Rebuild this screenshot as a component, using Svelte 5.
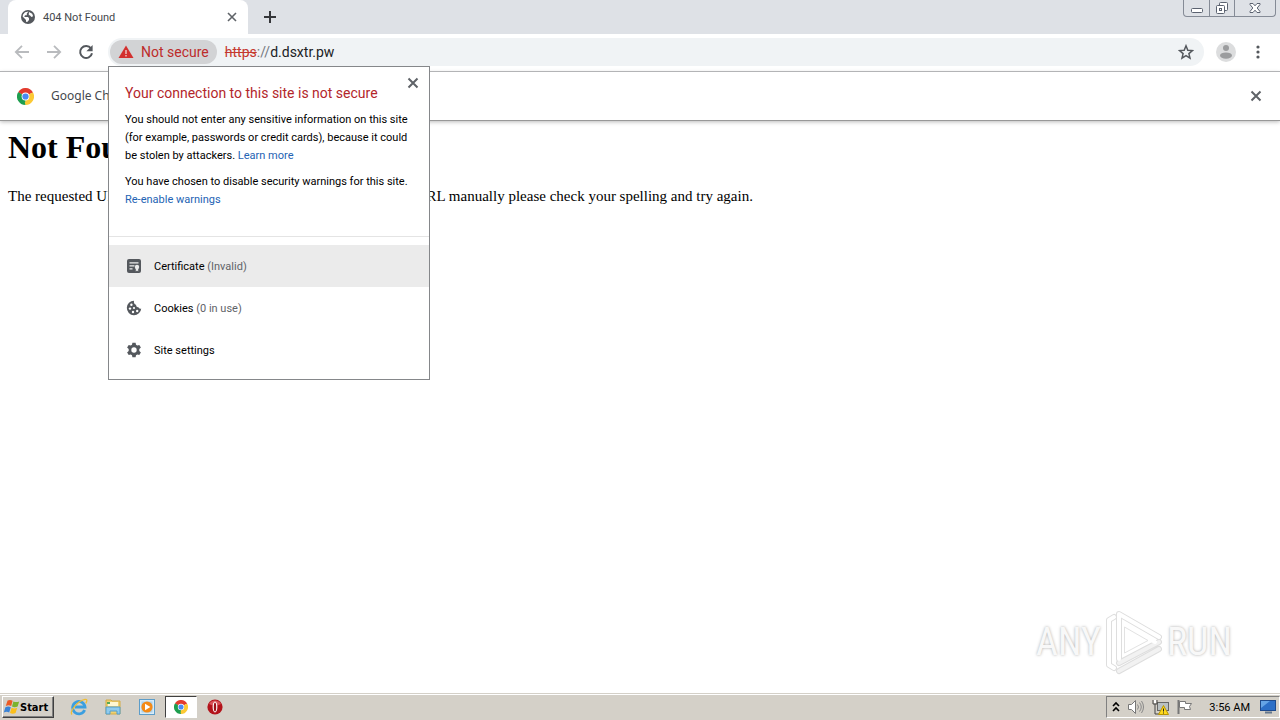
<script lang="ts">
	type RowIcon = 'certificate' | 'cookie' | 'settings';

	interface SiteRow {
		icon: RowIcon;
		label: string;
		detail?: string;
	}

	const rows: SiteRow[] = [
		{ icon: 'certificate', label: 'Certificate', detail: '(Invalid)' },
		{ icon: 'cookie', label: 'Cookies', detail: '(0 in use)' },
		{ icon: 'settings', label: 'Site settings' }
	];

	let active = $state<RowIcon>('certificate');
	let popupOpen = $state(true);
	let infobarOpen = $state(true);
</script>

{#snippet cross()}
	<svg width="12" height="12" viewBox="0 0 12 12">
		<path d="M1.5 1.5l9 9M10.5 1.5l-9 9" stroke="#5f6368" stroke-width="2" />
	</svg>
{/snippet}

{#snippet chrome(size: number)}
	<svg width={size} height={size} viewBox="0 0 48 48">
		<path d="M24 24L3.2 12A24 24 0 0 1 44.8 12z" fill="#e33b2e" />
		<path d="M24 24L44.8 12A24 24 0 0 1 24 48z" fill="#fcc934" />
		<path d="M24 24V48A24 24 0 0 1 3.2 12z" fill="#1e9e4f" />
		<path d="M24 13h20.8v-1H24z" fill="#e33b2e" />
		<path d="M14.5 29.5L3.2 12l7.6 4.4z" fill="#1e9e4f" />
		<path d="M33.5 29.5L24 48l-2-8z" fill="#fcc934" />
		<circle cx="24" cy="24" r="11" fill="#fff" />
		<circle cx="24" cy="24" r="8.8" fill="#4a8af4" />
	</svg>
{/snippet}

<div class="screen">
	<header class="tabstrip">
		<div class="tab">
			<svg width="16" height="16" viewBox="0 0 16 16">
				<circle cx="8" cy="8" r="7" fill="#54585d" />
				<path d="M8.5 2.5L6.8 4.6v1.6H5L4.3 8H8l1 1.3v1.6L7.2 13 6 12.8V11L2.6 7.6l.5-2L5 3.2z" fill="#fff" />
				<path d="M9 3l3.2 1.8.9 2.4-1.7.8-1.5-1.8H8.8V4.8z" fill="#fff" />
			</svg>
			<span class="tab-title">404 Not Found</span>
			<button class="plain" aria-label="Close tab">
				<svg width="10" height="10" viewBox="0 0 10 10">
					<path d="M1 1l8 8M9 1L1 9" stroke="#5f6368" stroke-width="1.6" />
				</svg>
			</button>
		</div>
		<button class="plain new-tab" aria-label="New tab">
			<svg width="12" height="12" viewBox="0 0 12 12">
				<path d="M6 0v12M0 6h12" stroke="#35363a" stroke-width="2" />
			</svg>
		</button>
		<div class="window-buttons">
			<button aria-label="Minimize">
				<svg width="12" height="16" viewBox="0 0 12 16">
					<rect x=".5" y="8.5" width="11" height="4" rx="1" fill="#fff" stroke="#5b6270" />
				</svg>
			</button>
			<button aria-label="Restore">
				<svg width="14" height="16" viewBox="0 0 14 16">
					<rect x="4.5" y="2.5" width="8" height="8" rx="1" fill="#fff" stroke="#5b6270" />
					<rect x="1.5" y="5.5" width="8" height="8" rx="1" fill="#fff" stroke="#5b6270" />
					<rect x="4.5" y="8.5" width="2" height="2" fill="#fff" stroke="#5b6270" />
				</svg>
			</button>
			<button class="wide" aria-label="Close">
				<svg width="12" height="16" viewBox="0 0 12 16">
					<path
						d="M1 3.5h3l2 2.3 2-2.3h3v1L8.2 8l2.8 3.5v1H8l-2-2.3-2 2.3H1v-1L3.8 8 1 4.5z"
						fill="#fff"
						stroke="#5b6270"
					/>
				</svg>
			</button>
		</div>
	</header>

	<nav class="toolbar">
		<button class="plain nav" aria-label="Back">
			<svg width="16" height="16" viewBox="0 0 16 16">
				<path d="M15 8H2M8 1.8L1.8 8 8 14.2" fill="none" stroke="#b9bbbe" stroke-width="1.8" />
			</svg>
		</button>
		<button class="plain nav" aria-label="Forward">
			<svg width="16" height="16" viewBox="0 0 16 16">
				<path d="M1 8h13M8 1.8L14.2 8 8 14.2" fill="none" stroke="#b9bbbe" stroke-width="1.8" />
			</svg>
		</button>
		<button class="plain nav" aria-label="Reload">
			<svg width="16" height="16" viewBox="0 0 16 16">
				<path d="M13 4.4A6 6 0 1 0 14 9.2" fill="none" stroke="#54585d" stroke-width="2" />
				<path d="M14.6 1v6.2H8.4z" fill="#54585d" />
			</svg>
		</button>
		<div class="omnibox">
			<button class="security-chip" onclick={() => (popupOpen = !popupOpen)}>
				<svg width="16" height="16" viewBox="0 0 16 16">
					<path d="M8 1.5L15.5 14H.5z" fill="#d3302f" />
					<path d="M8 6v4M8 11v1.6" stroke="#f0c9c8" stroke-width="1.4" />
				</svg>
				Not secure
			</button>
			<span class="url"><s>https</s><i>://</i>d.dsxtr.pw</span>
			<button class="plain" aria-label="Bookmark this page">
				<svg width="16" height="16" viewBox="0 0 16 16">
					<path
						d="M8 1.8l1.8 4.4 4.7.4-3.6 3 1.1 4.6L8 11.7l-4 2.5 1.1-4.6-3.6-3 4.7-.4z"
						fill="none"
						stroke="#54585d"
						stroke-width="1.5"
					/>
				</svg>
			</button>
		</div>
		<button class="plain" aria-label="Profile">
			<svg width="20" height="20" viewBox="0 0 20 20">
				<circle cx="10" cy="10" r="10" fill="#dcddde" />
				<circle cx="10" cy="6" r="3" fill="#9b9c9e" />
				<ellipse cx="10" cy="13.6" rx="6" ry="3.2" fill="#9b9c9e" />
			</svg>
		</button>
		<button class="plain menu" aria-label="Menu">
			<svg width="4" height="14" viewBox="0 0 4 14">
				<circle cx="2" cy="2" r="1.6" fill="#54585d" />
				<circle cx="2" cy="7" r="1.6" fill="#54585d" />
				<circle cx="2" cy="12" r="1.6" fill="#54585d" />
			</svg>
		</button>
	</nav>

	{#if infobarOpen}
		<div class="infobar">
			{@render chrome(17)}
			<span class="infobar-text">Google Chrome</span>
			<button class="plain" aria-label="Dismiss" onclick={() => (infobarOpen = false)}>
				{@render cross()}
			</button>
		</div>
	{/if}

	<main>
		<h1>Not Found</h1>
		<p>
			The requested URL was not found on this server. If you entered the URL manually please check
			your spelling and try again.
		</p>
		<div class="watermark">
			<span>ANY</span>
			<svg width="58" height="66" viewBox="0 0 58 66">
				<g fill="none" stroke="#dedede" stroke-width="6" stroke-linejoin="round" stroke-linecap="round">
					<path d="M9 8l-5 3v45l5 3" />
					<path d="M14 50V5l40 23M14 54l40-21M14 62l40-22" />
				</g>
				<g fill="none" stroke-width="4" stroke-linejoin="round" stroke-linecap="round">
					<path d="M14 54l40-21M14 62l40-22" stroke="#f2f2f2" />
					<path d="M9 8l-5 3v45l5 3M14 50V5l40 23M20 16l30 17" stroke="#fff" />
				</g>
				<path d="M19.500 18v26L43 31.500z" fill="#fff" stroke="#e2e2e2" stroke-linejoin="round" />
			</svg>
			<span>RUN</span>
		</div>
	</main>

	<footer class="taskbar">
		<button class="start">
			<svg width="17" height="16" viewBox="0 0 17 16">
				<path d="M4.6 1.600q2.600-1.400 5 .2L8.200 7Q5.600 5.600 2.800 7z" fill="#ec5a24" />
				<path d="M10.400 2.400q3 1.400 5.800 0L14.600 7.600q-3 1.400-5.600 0z" fill="#7bb32e" />
				<path d="M2.400 8.200q3-1.400 5.400 0L6.200 13.400q-2.600-1.400-5.400 0z" fill="#3a83d6" />
				<path d="M8.600 8.800q2.800 1.400 5.600 0l-1.600 5.200q-2.800 1.400-5.600 0z" fill="#fbbf1b" />
			</svg>
			Start
		</button>
		<div class="tasks">
			<button class="task" aria-label="Internet Explorer">
				<svg width="18" height="18" viewBox="0 0 18 18">
					<path d="M14.6 12A6.2 6.2 0 1 1 15 9H5" fill="none" stroke="#3b9fe0" stroke-width="2.8" />
					<path d="M2 16.4C-.6 14 7 3 15 1.4c2.6-.4 2 2 .8 4" fill="none" stroke="#efbd35" stroke-width="1.3" />
				</svg>
			</button>
			<button class="task" aria-label="Windows Explorer">
				<svg width="16" height="18" viewBox="0 0 16 18">
					<path d="M1 4V2h5l1 1h8v13H1z" fill="#f0d170" stroke="#d3ab46" />
					<path d="M3 4h10v4H3z" fill="#fff7d2" />
					<path d="M2 4h3v2H2z" fill="#58a957" />
					<path d="M1 9h14v7h-3v-3H5v3H1z" fill="#8fcbed" stroke="#509dce" />
				</svg>
			</button>
			<button class="task" aria-label="Media Player">
				<svg width="16" height="16" viewBox="0 0 16 16">
					<rect x=".5" y=".5" width="15" height="15" fill="#d7ebf8" stroke="#5d9dc9" />
					<rect x="2.5" y="2.5" width="11" height="11" fill="#a9d0ea" />
					<circle cx="8" cy="8" r="5.6" fill="#f48a16" />
					<path d="M6 4.8L11.4 8 6 11.2z" fill="#fff" />
				</svg>
			</button>
			<button class="task pressed" aria-label="Google Chrome">{@render chrome(14)}</button>
			<button class="task" aria-label="Opera">
				<svg width="16" height="16" viewBox="0 0 16 16">
					<circle cx="8" cy="8" r="7.6" fill="#b3131b" />
					<path d="M2 5a7 7 0 0 1 12 0q-6 3-12 0z" fill="#d9545a" />
					<ellipse cx="8" cy="8" rx="2.4" ry="5.4" fill="#fff" />
					<ellipse cx="8" cy="8" rx="1.2" ry="4.6" fill="#9c1017" />
				</svg>
			</button>
		</div>
		<div class="tray">
			<svg width="8" height="12" viewBox="0 0 8 12">
				<path d="M1 5l3-3 3 3M1 10l3-3 3 3" fill="none" stroke="#000" stroke-width="1.6" />
			</svg>
			<svg width="18" height="16" viewBox="0 0 18 16">
				<path d="M1.5 5.5h3l4-4v13l-4-4h-3z" fill="#fff" stroke="#777" />
				<path d="M10.5 5.5q2 2.5 0 5M12.5 3.5q3.5 4.5 0 9M14.5 2q4 6 0 12" fill="none" stroke="#888" />
			</svg>
			<svg width="18" height="16" viewBox="0 0 18 16">
				<rect x="5.5" y="3.5" width="11" height="8" fill="#b9c0c2" stroke="#666" />
				<path d="M1 1v4h4V1M3 5v10h4" fill="none" stroke="#444" />
				<path d="M2 1h2v3H2z" fill="#fff" />
				<path d="M11.5 6.5l5 9h-10z" fill="#ffd91c" stroke="#b99500" />
				<path d="M11.5 9.5v3M11.5 13.5v1" stroke="#222" />
			</svg>
			<svg width="16" height="16" viewBox="0 0 16 16">
				<path d="M1.5 1v14" stroke="#777" stroke-width="2" />
				<path d="M2.5 2.5h6v2h6l-2 3 1 3h-6v-2h-5z" fill="#fff" stroke="#777" />
			</svg>
			<time>3:56 AM</time>
			<svg width="16" height="14" viewBox="0 0 16 14">
				<rect x=".5" y=".5" width="15" height="10" fill="#2c6fc7" stroke="#1e4a8c" />
				<path d="M1 1h9L1 8z" fill="#65a4e6" />
				<path d="M5 12.5h7" stroke="#64778d" stroke-width="2" />
			</svg>
		</div>
	</footer>

	{#if popupOpen}
		<section class="popup">
			<div class="popup-info">
				<div class="popup-head">
					<h2>Your connection to this site is not secure</h2>
					<button class="plain" aria-label="Close" onclick={() => (popupOpen = false)}>
						{@render cross()}
					</button>
				</div>
				<p>
					You should not enter any sensitive information on this site<br />
					(for example, passwords or credit cards), because it could<br />
					be stolen by attackers. <a href="#learn">Learn more</a>
				</p>
				<p>
					You have chosen to disable security warnings for this site.<br />
					<a href="#warnings">Re-enable warnings</a>
				</p>
			</div>
			<div class="popup-rows">
				{#each rows as row (row.icon)}
					<button class="row" class:active={active === row.icon} onmouseenter={() => (active = row.icon)}>
						<svg width="16" height="16" viewBox="0 0 16 16">
							{#if row.icon === 'certificate'}
								<rect x="1" y="1" width="14" height="14" rx="2" fill="#54585d" />
								<path d="M3.5 4.8h9M3.5 7.8h5M3.5 10.8h3" stroke="#ebebeb" stroke-width="1.3" />
								<circle cx="11" cy="9" r="2.2" fill="#ebebeb" />
								<path d="M9.8 10h2.4v3.5L11 12.6l-1.2.9z" fill="#ebebeb" />
							{:else if row.icon === 'cookie'}
								<path
									d="M8 .8a7.2 7.2 0 1 0 7.2 7.6q-2 .8-2.8-1.2-2.4.4-2.4-2.4-2.6-.8-2-4z"
									fill="#54585d"
								/>
								<g fill="#fff">
									<circle cx="5.4" cy="4.8" r="1.2" />
									<circle cx="4" cy="8.6" r="1.2" />
									<circle cx="8" cy="8" r="1.1" />
									<circle cx="7" cy="12" r="1.2" />
									<circle cx="11.2" cy="11" r="1.2" />
								</g>
							{:else}
								<path
									d="M6.4.8h3.2l.4 2 1.3.8 2-.7 1.6 2.7-1.6 1.4v2l1.6 1.4-1.6 2.7-2-.7-1.3.8-.4 2H6.4l-.4-2-1.3-.8-2 .7-1.6-2.7L2.7 9V7L1.1 5.6l1.6-2.7 2 .7L6 2.8z"
									fill="#54585d"
								/>
								<circle cx="8" cy="8" r="2.7" fill="#fff" />
							{/if}
						</svg>
						<span>{row.label} {#if row.detail}<small>{row.detail}</small>{/if}</span>
					</button>
				{/each}
			</div>
		</section>
	{/if}
</div>

<style>
	:global(body) {
		margin: 0;
	}

	.screen {
		position: relative;
		display: flex;
		flex-direction: column;
		min-height: 100vh;
		background: #fff;
		color: #000;
		font-family: Roboto, 'Noto Sans', sans-serif;
		font-size: 11px;
	}

	button {
		font: inherit;
		color: inherit;
		border: 0;
		padding: 0;
		cursor: pointer;
	}

	svg {
		display: block;
		flex-shrink: 0;
	}

	.plain {
		background: none;
	}

	/* Tab strip */
	.tabstrip {
		display: flex;
		align-items: center;
		height: 34px;
		padding-left: 8px;
		background: #dee1e6;
	}

	.tab {
		display: flex;
		align-items: center;
		gap: 7px;
		box-sizing: border-box;
		width: 240px;
		height: 34px;
		padding: 0 11px 0 12px;
		border-radius: 8px 8px 0 0;
		background: #fff;
		color: #45484d;
	}

	.tab-title {
		flex: 1;
	}

	.new-tab {
		margin-left: 16px;
	}

	.window-buttons {
		display: flex;
		align-self: flex-start;
		margin-left: auto;
		margin-right: 4px;
		border: 1px solid #858b96;
		border-top: 0;
		border-radius: 0 0 4px 4px;
	}

	.window-buttons button {
		display: flex;
		justify-content: center;
		width: 25px;
		height: 16px;
		background: none;
	}

	.window-buttons button + button {
		border-left: 1px solid #858b96;
	}

	.window-buttons .wide {
		width: 41px;
	}

	/* Toolbar */
	.toolbar {
		display: flex;
		align-items: center;
		height: 36px;
		padding: 0 20px 1px 6px;
		border-bottom: 1px solid #b0b2b5;
	}

	.nav {
		display: flex;
		justify-content: center;
		width: 32px;
	}

	.omnibox {
		display: flex;
		align-items: center;
		flex: 1;
		height: 28px;
		margin: 0 12px 0 6px;
		padding: 0 10px 0 2px;
		border-radius: 14px;
		background: #f0f3f5;
		font-size: 14px;
	}

	.security-chip {
		display: flex;
		align-items: center;
		gap: 7px;
		height: 24px;
		padding: 0 8px;
		border-radius: 12px;
		background: #d2d3d5;
		color: #bd2c2b;
	}

	.url {
		flex: 1;
		margin-left: 8px;
		color: #202124;
	}

	.url s {
		color: #c5392f;
	}

	.url i {
		color: #75797e;
		font-style: normal;
	}

	.menu {
		margin-left: 20px;
	}

	/* Infobar */
	.infobar {
		display: flex;
		align-items: center;
		gap: 17px;
		height: 48px;
		padding: 0 18px 0 17px;
		border-bottom: 1px solid #989898;
		box-shadow: 0 1px 4px #bbb;
		font-family: 'Noto Sans', sans-serif;
		font-size: 12px;
		line-height: 14px;
		color: #45484d;
	}

	.infobar-text {
		flex: 1;
	}

	/* Page */
	main {
		display: flex;
		flex-direction: column;
		flex: 1;
		padding: 8px;
		font-family: 'Liberation Serif', serif;
		font-size: 15px;
	}

	h1 {
		margin: 0;
		font-size: 32px;
		line-height: 36px;
	}

	main p {
		margin: 22px 0 0;
		line-height: 18px;
	}

	.watermark {
		display: flex;
		align-items: center;
		align-self: flex-end;
		gap: 4px;
		margin: auto 40px 10px 0;
		color: #f8f8f8;
		font-family: 'Liberation Sans Narrow', 'Roboto Condensed', 'Liberation Sans', sans-serif;
		font-size: 38px;
		text-shadow: 0 0 3px #aaa;
	}

	/* Taskbar */
	.taskbar {
		display: flex;
		align-items: center;
		height: 26px;
		border-top: 1px solid #d4d0c8;
		box-shadow: inset 0 1px #fff;
		background: #d4d0c8;
	}

	.start {
		display: flex;
		align-items: center;
		box-sizing: border-box;
		width: 52px;
		height: 22px;
		margin-left: 2px;
		border: 1px solid;
		border-color: #fff #404040 #404040 #fff;
		box-shadow: inset -1px -1px #808080;
		background: #d4d0c8;
		font-family: 'DejaVu Sans Condensed', 'Noto Sans', sans-serif;
		font-weight: 700;
	}

	.tasks {
		display: flex;
		gap: 2px;
		margin-left: 9px;
	}

	.task {
		display: flex;
		align-items: center;
		justify-content: center;
		box-sizing: border-box;
		width: 32px;
		height: 22px;
		background: none;
	}

	.task.pressed {
		border: 1px solid;
		border-color: #404040 #fff #fff #404040;
		background: #fff;
	}

	.tray {
		display: flex;
		align-items: center;
		gap: 7px;
		box-sizing: border-box;
		height: 22px;
		margin-left: auto;
		padding: 0 3px 0 5px;
		border: 1px solid;
		border-color: #808080 #fff #fff #808080;
	}

	.tray time {
		margin: 0 3px 0 9px;
	}

	/* Site information popup */
	.popup {
		position: absolute;
		top: 66px;
		left: 108px;
		box-sizing: border-box;
		width: 322px;
		padding-bottom: 8px;
		border: 1px solid #85878a;
		background: #fff;
	}

	.popup-info {
		padding: 10px 10px 27px 16px;
		border-bottom: 1px solid #e4e4e4;
	}

	.popup-head {
		display: flex;
		justify-content: space-between;
	}

	h2 {
		margin: 5px 0 0;
		font-size: 14px;
		font-weight: 400;
		line-height: 22px;
		color: #b3262b;
	}

	.popup-head button {
		align-self: flex-start;
	}

	.popup-info p {
		margin: 7px 0 8px;
		line-height: 18px;
		white-space: nowrap;
	}

	.popup-info p + p {
		margin: 0;
	}

	a {
		color: #2463b4;
		text-decoration: none;
	}

	.popup-rows {
		padding-top: 8px;
	}

	.row {
		display: flex;
		align-items: center;
		gap: 12px;
		width: 100%;
		height: 42px;
		padding: 0 17px;
		background: #fff;
	}

	.row.active {
		background: #ebebeb;
	}

	.row small {
		font-size: 11px;
		color: #5f6368;
	}
</style>
